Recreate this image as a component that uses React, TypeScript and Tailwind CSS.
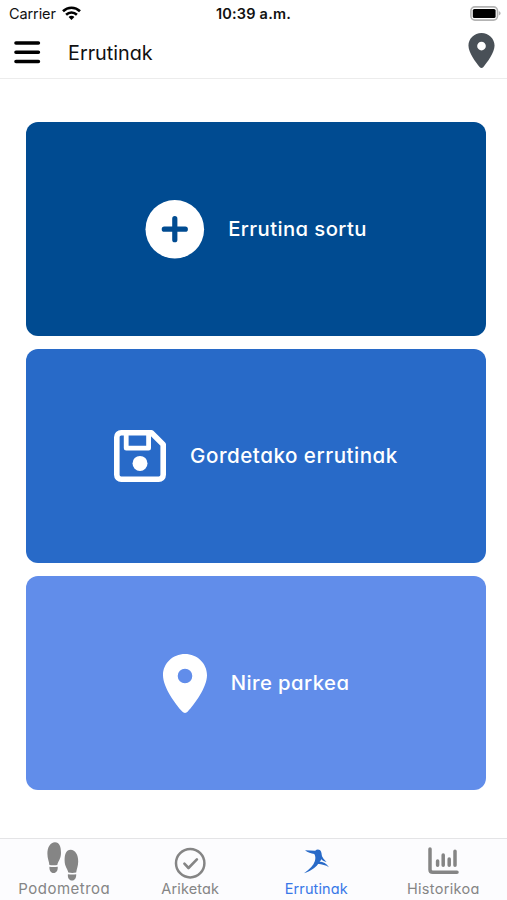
import type { ReactNode } from "react"

const Wifi = () => (
    <svg className="h-[15px] w-[19px]" viewBox="0 0 19 15" fill="none" stroke="#000" strokeWidth="2.6">
        <path d="M1 5.2C5.8 .6 13.2 .6 18 5.2" />
        <path d="M4.1 8.7C7.2 5.8 11.8 5.8 14.9 8.7" />
        <path d="M9.5 14 6.6 11C8.2 9.4 10.8 9.4 12.4 11Z" fill="#000" stroke="none" />
    </svg>
)

const Battery = () => (
    <svg className="h-[15px] w-[31px]" viewBox="0 0 31 15">
        <rect x=".9" y=".9" width="26.6" height="13.2" rx="4" fill="#fff" stroke="#b3b3b3" strokeWidth="1.6" />
        <rect x="2.8" y="2.9" width="22.8" height="9.2" rx="1.6" fill="#000" />
        <path d="M28.8 5.2c2.4.6 2.4 3.6 0 4.2z" fill="#b3b3b3" />
    </svg>
)

const Pin = ({ className }: { className: string }) => (
    <svg className={className} viewBox="0 0 44 59" fill="currentColor">
        <path fillRule="evenodd" d="M22 0C9.8 0 0 9.4 0 21.2 0 33.5 12.5 50 19.2 57.6c1.6 1.8 4 1.8 5.6 0C31.5 50 44 33.5 44 21.2 44 9.4 34.2 0 22 0Zm0 14.7a7.3 7.3 0 1 1 0 14.6 7.3 7.3 0 0 1 0-14.6Z" />
    </svg>
)

const Plus = () => (
    <svg className="size-[59px] overflow-visible" viewBox="0 0 59 59">
        <circle cx="29.8" cy="29.2" r="29.3" fill="#fff" />
        <path d="M29.8 18.7v21M19.3 29.2h21" stroke="#004b91" strokeWidth="5.2" strokeLinecap="round" />
    </svg>
)

const Save = () => (
    <svg className="size-[52px]" viewBox="0 0 52 52" fill="none" stroke="#fff" strokeWidth="5.6" strokeLinejoin="round">
        <path d="M7.2 2.8H37.4L49.2 14.4V44.8a4.4 4.4 0 0 1-4.4 4.4H7.2a4.4 4.4 0 0 1-4.4-4.4V7.2a4.4 4.4 0 0 1 4.4-4.4Z" />
        <path d="M12.2 3v15.2h22.4V3" strokeWidth="4.8" />
        <circle cx="26" cy="33.4" r="7.5" fill="#fff" stroke="none" />
    </svg>
)

const Steps = () => (
    <svg className="h-[40px] w-[32px]" viewBox="0 0 32 40" fill="currentColor">
        <path d="M8 1.2C3.2 1.2.4 6.4.4 12.8c0 4.6 1.6 7.6 2 11.1 2.8.6 5.4.5 7.9 0 .5-3.5 3.7-5.9 3.7-12C14 5.6 12.4 1.2 8 1.2Z" />
        <path d="M2.4 25.7c2.7.6 5.6.5 8.3 0 .4 3.8-1.4 6.3-4 6.3-2.6 0-4.5-2.3-4.3-6.3Z" />
        <path d="M23.6 8.8c-4.4 0-6 4.4-6 10.7 0 6.1 3.2 8.5 3.7 12 2.5.5 5.1.6 7.9 0 .4-3.5 2-6.5 2-11.1 0-6.4-2.8-11.6-7.6-11.6Z" />
        <path d="M20.9 33.2c2.7.5 5.6.6 8.3 0 .2 4-1.7 6.3-4.3 6.3-2.6 0-4.4-2.5-4-6.3Z" />
    </svg>
)

const Check = () => (
    <svg className="mt-[4px] size-[32px]" viewBox="0 0 32 32" fill="none" stroke="currentColor" strokeWidth="2.5" strokeLinecap="round" strokeLinejoin="round">
        <circle cx="16.2" cy="16.2" r="14.2" />
        <path d="m10.4 16.6 4.1 4.4 8.4-8.6" strokeWidth="2.6" />
    </svg>
)

const Athlete = () => (
    <svg className="mt-px ml-[2px] h-[25px] w-[26px]" viewBox="0 0 26 25" fill="#286ac8">
        <path d="M1 1.2C4.6 1.2 8 1.4 11.2 1.7 13 0 16.2.3 17.1 2.7c.7 1.9.8 3.7.4 5.6-.9 4.2-3.6 7.8-7.3 10.7-2.8 2.2-6.2 4-10.2 5.3 5.6-4.2 9.6-8 10.9-12.3.8-2.7.6-5-.6-7C7.2 4.6 3.6 3.4 1 1.2Z" />
        <path d="M17.3 5.8c1.2 3 3 5.1 5.2 7.1-2.2-.5-3.9-1.4-5.2-2.7-.6 1.1-1.2 1.8-2.2 2.5Z" />
        <path d="M15.2 12.4c4.2.1 7.2 2 9.8 5.8-3.4-2-6.6-2.8-11.6-3.4Z" />
    </svg>
)

const Chart = () => (
    <svg className="ml-[2px] h-[28px] w-[31px]" viewBox="0 0 31 28" fill="none" stroke="currentColor" strokeWidth="3.5" strokeLinecap="round" strokeLinejoin="round">
        <path d="M2 2v20.5c0 1.8 1 2.8 2.8 2.8H29" />
        <path d="M9.6 14v4.2M15.2 8v10.2M21.2 12v6.2M27 4.2v14" />
    </svg>
)

type CardProps = { color: string; icon: ReactNode; label: string; text: string }

const Card = ({ color, icon, label, text }: CardProps) => (
    <button className={`flex h-[214px] w-full items-center justify-center gap-6 rounded-[12px] text-white ${color}`}>
        {icon}
        <span className={`-mt-px leading-[30px] font-medium whitespace-nowrap ${text}`}>{label}</span>
    </button>
)

type TabProps = { icon: ReactNode; label: string; text: string; active?: boolean }

const Tab = ({ icon, label, text, active }: TabProps) => (
    <button className={`flex w-[126.5px] flex-col items-center ${active ? "text-[#3878e8]" : "text-[#858585]"}`}>
        <span className="flex h-[39px] items-center justify-center">{icon}</span>
        <span className={`leading-[18px] whitespace-nowrap ${text}`}>{label}</span>
    </button>
)

export default function App() {
    return (
        <div className="flex h-[900px] w-[507px] flex-col overflow-hidden bg-white font-['Inter',sans-serif] [font-feature-settings:'cv11']">
            <header className="h-[79px] border-b border-[#ececec]">
                <div className="grid h-[27px] grid-cols-3 items-center pr-[6px] pl-[9px] text-[14.5px] text-[#111] [font-feature-settings:normal]">
                    <div className="flex items-center gap-[6px]">
                        <span className="tracking-[-0.1px]">Carrier</span>
                        <Wifi />
                    </div>
                    <span className="-ml-[3px] text-center font-semibold tracking-[0.2px] whitespace-nowrap">10:39 a.m.</span>
                    <div className="flex justify-end"><Battery /></div>
                </div>
                <div className="flex h-[50px] items-center pr-[12px] pl-[14px]">
                    <svg className="h-[23px] w-[27px]" viewBox="0 0 27 23" stroke="#000" strokeWidth="3.6" strokeLinecap="round">
                        <path d="M2 2h22.4M2 11.2h22.4M2 20.5h22.4" />
                    </svg>
                    <h1 className="mt-px ml-[27px] text-[19.8px] leading-[30px] text-[#111]">Errutinak</h1>
                    <Pin className="-mt-[3px] ml-auto h-[35px] w-[27px] text-[#495057]" />
                </div>
            </header>
            <main className="flex grow flex-col gap-[13px] pt-[43px] pr-[21px] pl-[26px]">
                <Card color="bg-[#004b91]" icon={<Plus />} label="Errutina sortu" text="text-[20.3px] tracking-[0.4px]" />
                <Card color="bg-[#286ac8]" icon={<Save />} label="Gordetako errutinak" text="text-[20.6px] tracking-[0.5px]" />
                <Card color="bg-[#618dea]" icon={<Pin className="h-[59px] w-[44px]" />} label="Nire parkea" text="text-[20.3px] tracking-[0.45px]" />
            </main>
            <nav className="flex h-[62px] border-t border-[#e4e4e6] bg-[#fcfcfe] pt-[2px]">
                <Tab icon={<Steps />} label="Podometroa" text="text-[15px] tracking-[0.5px] pl-[2px]" />
                <Tab icon={<Check />} label="Ariketak" text="text-[14.5px] tracking-[0.15px] pl-px" />
                <Tab icon={<Athlete />} label="Errutinak" text="text-[14.5px] tracking-[0.1px]" active />
                <Tab icon={<Chart />} label="Historikoa" text="text-[14.5px] tracking-[0.3px] pl-px" />
            </nav>
        </div>
    )
}
